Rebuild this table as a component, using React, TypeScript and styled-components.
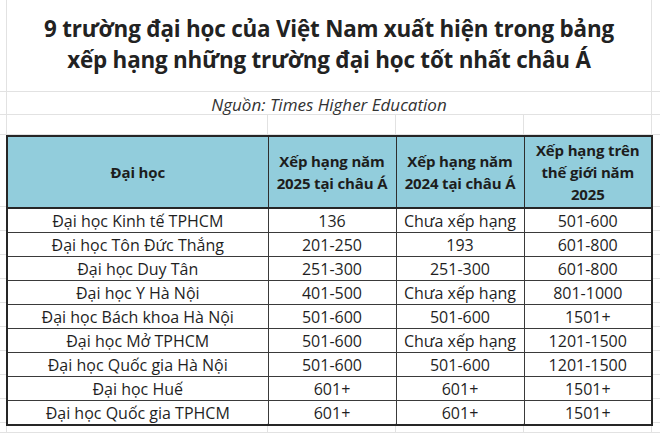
import React from "react";
import styled, { createGlobalStyle } from "styled-components";

const Global = createGlobalStyle`
  html, body { margin: 0; padding: 0; background: #fff; }
  body { font-family: "Open Sans", "Noto Sans", sans-serif; color: #1f1f1f; }
`;

const FAINT = "#e2e2e2";

const Sheet = styled.div`
  width: 660px;
  height: 433px;
  overflow: hidden;
  display: grid;
  grid-template-columns: 7px 261px 128px 128px 128px 1fr;
  grid-template-rows: 92px 23px 20px 72px repeat(9, 24px) 1fr;
`;

const Gutter = styled.div<{ $row: number; $col: number }>`
  grid-row: ${(p) => p.$row};
  grid-column: ${(p) => p.$col};
  box-sizing: border-box;
  border-bottom: 1px solid ${FAINT};
  ${(p) => (p.$col === 1 ? `border-right: 1px solid ${FAINT};` : "")}
`;

const EmptyCell = styled.div<{ $row: number; $col: number }>`
  grid-row: ${(p) => p.$row};
  grid-column: ${(p) => p.$col};
  box-sizing: border-box;
  border-right: 1px solid ${FAINT};
  border-bottom: 1px solid ${FAINT};
`;

const Title = styled.h1`
  grid-row: 1;
  grid-column: 2 / 6;
  margin: 0;
  box-sizing: border-box;
  border-right: 1px solid ${FAINT};
  border-bottom: 1px solid ${FAINT};
  display: flex;
  flex-direction: column;
  align-items: center;
  justify-content: center;
  padding-bottom: 3px;
  font-size: 22.4px;
  line-height: 31px;
  font-weight: 700;
  color: #222;
  text-align: center;
  letter-spacing: -0.2px;
`;

const Source = styled.div`
  grid-row: 2;
  grid-column: 2 / 6;
  box-sizing: border-box;
  border-right: 1px solid ${FAINT};
  border-bottom: 1px solid ${FAINT};
  display: flex;
  align-items: center;
  justify-content: center;
  padding-top: 2px;
  font-size: 17px;
  font-style: italic;
  color: #333;
`;

const TableWrap = styled.div`
  grid-row: 4 / 14;
  grid-column: 2 / 6;
  position: relative;
  margin-left: -1px;
`;

const Table = styled.table`
  border-collapse: collapse;
  width: calc(100% + 1px);
  table-layout: fixed;
  border: 2px solid #262626;
`;

const Th = styled.th`
  background: #92cddc;
  border: 1px solid #2e2e2e;
  border-bottom: 2px solid #262626;
  font-size: 15px;
  line-height: 22px;
  font-weight: 700;
  color: #1d1d1d;
  text-align: center;
  vertical-align: middle;
  padding: 0 2px;
  height: 70px;
  letter-spacing: -0.15px;
`;

const Td = styled.td`
  border: 1px solid #3a3a3a;
  font-size: 16px;
  line-height: 20px;
  text-align: center;
  vertical-align: middle;
  padding: 0;
  height: 23px;
  color: #1f1f1f;
  white-space: nowrap;
`;

const rows: [string, string, string, string][] = [
  ["Đại học Kinh tế TPHCM", "136", "Chưa xếp hạng", "501-600"],
  ["Đại học Tôn Đức Thắng", "201-250", "193", "601-800"],
  ["Đại học Duy Tân", "251-300", "251-300", "601-800"],
  ["Đại học Y Hà Nội", "401-500", "Chưa xếp hạng", "801-1000"],
  ["Đại học Bách khoa Hà Nội", "501-600", "501-600", "1501+"],
  ["Đại học Mở TPHCM", "501-600", "Chưa xếp hạng", "1201-1500"],
  ["Đại học Quốc gia Hà Nội", "501-600", "501-600", "1201-1500"],
  ["Đại học Huế", "601+", "601+", "1501+"],
  ["Đại học Quốc gia TPHCM", "601+", "601+", "1501+"],
];

export default function App() {
  const gutterRows = Array.from({ length: 14 }, (_, i) => i + 1);
  return (
    <>
      <Global />
      <Sheet>
        {gutterRows.map((r) => (
          <React.Fragment key={r}>
            <Gutter $row={r} $col={1} />
            <Gutter $row={r} $col={6} />
          </React.Fragment>
        ))}
        <Title>
          <span>9 trường đại học của Việt Nam xuất hiện trong bảng</span>
          <span>xếp hạng những trường đại học tốt nhất châu Á</span>
        </Title>
        <Source>Nguồn: Times Higher Education</Source>
        {[2, 3, 4, 5].map((c) => (
          <React.Fragment key={c}>
            <EmptyCell $row={3} $col={c} />
            <EmptyCell $row={14} $col={c} />
          </React.Fragment>
        ))}
        <TableWrap>
          <Table>
            <colgroup>
              <col style={{ width: 261 }} />
              <col style={{ width: 128 }} />
              <col style={{ width: 128 }} />
              <col style={{ width: 128 }} />
            </colgroup>
            <thead>
              <tr>
                <Th>Đại học</Th>
                <Th>
                  Xếp hạng năm
                  <br />
                  2025 tại châu Á
                </Th>
                <Th>
                  Xếp hạng năm
                  <br />
                  2024 tại châu Á
                </Th>
                <Th>
                  Xếp hạng trên
                  <br />
                  thế giới năm
                  <br />
                  2025
                </Th>
              </tr>
            </thead>
            <tbody>
              {rows.map((r) => (
                <tr key={r[0]}>
                  {r.map((v, i) => (
                    <Td key={i}>{v}</Td>
                  ))}
                </tr>
              ))}
            </tbody>
          </Table>
        </TableWrap>
      </Sheet>
    </>
  );
}
